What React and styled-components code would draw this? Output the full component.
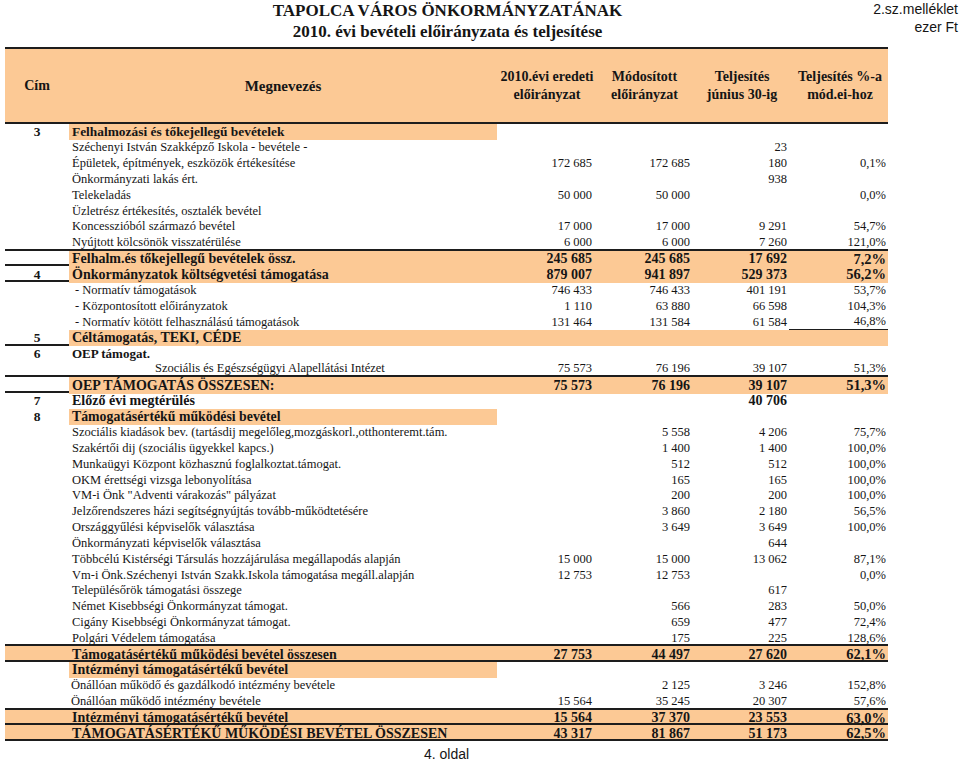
import React from 'react';
import styled, { createGlobalStyle, css } from 'styled-components';

const ORANGE = '#fcc995';
const LINE = '#1d1d1d';
const COLS = '64px 428px 97px 98px 97px 99px';

const GlobalStyle = createGlobalStyle`
  html, body {
    margin: 0;
    padding: 0;
    background: #fff;
  }
  body {
    font-family: "Liberation Serif", "Times New Roman", serif;
    color: #151515;
  }
`;

const Page = styled.div`
  width: 960px;
  padding-left: 5px;
  box-sizing: border-box;
`;

const Top = styled.header`
  display: grid;
  grid-template-columns: 865px 1fr;
  padding-right: 2px;
`;

const Titles = styled.div`
  padding-left: 20px;
  text-align: center;
  font-weight: bold;
  font-size: 17px;
  line-height: 21px;
`;

const Notes = styled.div`
  text-align: right;
  white-space: nowrap;
  font-family: "Liberation Sans", Arial, sans-serif;
  font-size: 14px;
  line-height: 18px;
`;

const Sheet = styled.section`
  width: 883px;
  margin-top: 5px;
`;

const HeadBand = styled.div`
  display: grid;
  grid-template-columns: ${COLS};
  align-items: center;
  height: 77px;
  box-sizing: border-box;
  background: ${ORANGE};
  border-top: 2px solid ${LINE};
  border-bottom: 2px solid ${LINE};
  font-weight: bold;
  font-size: 14px;
  line-height: 18px;
  text-align: center;
`;

const HeadCell = styled.div`
  padding-left: ${p => (p.$num ? '3px' : '0')};
  font-size: ${p => (p.$big ? '15px' : 'inherit')};
`;

const Row = styled.div`
  display: grid;
  grid-template-columns: ${COLS};
  height: 15.84px;
  box-sizing: border-box;
  border-bottom: ${p => (p.$rule ? `2px solid ${LINE}` : 'none')};
  background: ${p => (p.$kind === 'grand' ? ORANGE : 'transparent')};
`;

const cellBase = css`
  display: flex;
  align-items: center;
  white-space: nowrap;
  min-width: 0;
`;

const CodeCell = styled.div`
  ${cellBase};
  justify-content: center;
  font-weight: bold;
  font-size: 13.5px;
`;

const NameCell = styled.div`
  ${cellBase};
  overflow: visible;
  padding-left: ${p => p.$indent || 3}px;
  font-size: ${p => (p.$size ? `${p.$size}px` : p.$bold ? '14px' : '12.5px')};
  font-weight: ${p => (p.$bold ? 'bold' : 'normal')};
  background: ${p => (p.$shade ? ORANGE : 'transparent')};
`;

const NumCell = styled.div`
  ${cellBase};
  justify-content: flex-end;
  padding-right: 2px;
  font-size: ${p => (p.$bold ? (p.$pct ? '14.5px' : '14px') : '12.5px')};
  font-weight: ${p => (p.$bold ? 'bold' : 'normal')};
  background: ${p => (p.$shade ? ORANGE : 'transparent')};
  box-sizing: border-box;
  border-bottom: ${p => (p.$rule ? `2px solid ${LINE}` : 'none')};
`;

const Footer = styled.div`
  width: 883px;
  margin-top: 6px;
  text-align: center;
  font-family: "Liberation Sans", Arial, sans-serif;
  font-size: 14px;
  line-height: 14px;
`;

const E = ['', '', '', ''];

const rows = [
  { code: '3', name: 'Felhalmozási és tőkejellegű bevételek', kind: 'label', size: 13.4, v: E },
  { name: 'Széchenyi István Szakképző Iskola - bevétele -', v: ['', '', '23', ''] },
  { name: 'Épületek, építmények, eszközök értékesítése', v: ['172 685', '172 685', '180', '0,1%'] },
  { name: 'Önkormányzati lakás ért.', v: ['', '', '938', ''] },
  { name: 'Telekeladás', v: ['50 000', '50 000', '', '0,0%'] },
  { name: 'Üzletrész értékesítés, osztalék bevétel', v: E },
  { name: 'Koncesszióból származó bevétel', v: ['17 000', '17 000', '9 291', '54,7%'] },
  { name: 'Nyújtott kölcsönök visszatérülése', v: ['6 000', '6 000', '7 260', '121,0%'], rule: true },
  { name: 'Felhalm.és tőkejellegű bevételek össz.', kind: 'total', v: ['245 685', '245 685', '17 692', '7,2%'], rule: true },
  { code: '4', name: 'Önkormányzatok költségvetési támogatása', kind: 'total', v: ['879 007', '941 897', '529 373', '56,2%'], rule: true },
  { name: '- Normatív támogatások', indent: 6, v: ['746 433', '746 433', '401 191', '53,7%'] },
  { name: '- Központosított előirányzatok', indent: 6, v: ['1 110', '63 880', '66 598', '104,3%'] },
  { name: '- Normatív kötött felhasználású támogatások', indent: 6, v: ['131 464', '131 584', '61 584', '46,8%'], pctRule: true },
  { code: '5', name: 'Céltámogatás, TEKI, CÉDE', kind: 'total', v: E, rule: true },
  { code: '6', name: 'OEP támogat.', kind: 'head', size: 13, v: E },
  { name: 'Szociális és Egészségügyi Alapellátási Intézet', indent: 86, v: ['75 573', '76 196', '39 107', '51,3%'], rule: true },
  { name: 'OEP TÁMOGATÁS ÖSSZESEN:', kind: 'total', v: ['75 573', '76 196', '39 107', '51,3%'], rule: true },
  { code: '7', name: 'Előző évi megtérülés', kind: 'head', v: ['', '', '40 706', ''] },
  { code: '8', name: 'Támogatásértékű működési bevétel', kind: 'label', size: 13.8, v: E },
  { name: 'Szociális kiadások bev. (tartásdij megelőleg,mozgáskorl.,otthonteremt.tám.', v: ['', '5 558', '4 206', '75,7%'] },
  { name: 'Szakértői dij (szociális ügyekkel kapcs.)', v: ['', '1 400', '1 400', '100,0%'] },
  { name: 'Munkaügyi Központ közhasznú foglalkoztat.támogat.', v: ['', '512', '512', '100,0%'] },
  { name: 'OKM érettségi vizsga lebonyolítása', v: ['', '165', '165', '100,0%'] },
  { name: 'VM-i Önk "Adventi várakozás" pályázat', v: ['', '200', '200', '100,0%'] },
  { name: 'Jelzőrendszeres házi segítségnyújtás tovább-működtetésére', v: ['', '3 860', '2 180', '56,5%'] },
  { name: 'Országgyűlési képviselők választása', v: ['', '3 649', '3 649', '100,0%'] },
  { name: 'Önkormányzati képviselők választása', v: ['', '', '644', ''] },
  { name: 'Többcélú Kistérségi Társulás hozzájárulása megállapodás alapján', v: ['15 000', '15 000', '13 062', '87,1%'] },
  { name: 'Vm-i Önk.Széchenyi István Szakk.Iskola támogatása megáll.alapján', v: ['12 753', '12 753', '', '0,0%'] },
  { name: 'Településőrök támogatási összege', v: ['', '', '617', ''] },
  { name: 'Német Kisebbségi Önkormányzat támogat.', v: ['', '566', '283', '50,0%'] },
  { name: 'Cigány Kisebbségi Önkormányzat támogat.', v: ['', '659', '477', '72,4%'] },
  { name: 'Polgári Védelem támogatása', v: ['', '175', '225', '128,6%'], rule: true },
  { name: 'Támogatásértékű működési bevétel összesen', kind: 'grand', v: ['27 753', '44 497', '27 620', '62,1%'], rule: true },
  { name: 'Intézményi támogatásértékű bevétel', kind: 'label', v: E },
  { name: 'Önállóan működő és gazdálkodó  intézmény bevétele', indent: 2, v: ['', '2 125', '3 246', '152,8%'] },
  { name: 'Önállóan működő intézmény bevétele', indent: 2, v: ['15 564', '35 245', '20 307', '57,6%'], rule: true },
  { name: 'Intézményi támogatásértékű bevétel', kind: 'grand', v: ['15 564', '37 370', '23 553', '63,0%'], rule: true },
  { name: 'TÁMOGATÁSÉRTÉKŰ MŰKÖDÉSI BEVÉTEL ÖSSZESEN', kind: 'grand', v: ['43 317', '81 867', '51 173', '62,5%'], rule: true },
];

const headers = [
  ['2010.évi eredeti', 'előirányzat'],
  ['Módosított', 'előirányzat'],
  ['Teljesítés', 'június 30-ig'],
  ['Teljesítés %-a', 'mód.ei-hoz'],
];

function LineRow({ row }) {
  const kind = row.kind || 'item';
  const bold = kind !== 'item';
  const shadeName = kind === 'label' || kind === 'total';
  const shadeNums = kind === 'total';
  return (
    <Row $kind={kind} $rule={row.rule}>
      <CodeCell>{row.code}</CodeCell>
      <NameCell $bold={bold} $shade={shadeName} $indent={row.indent} $size={row.size}>
        {row.name}
      </NameCell>
      {row.v.map((val, i) => (
        <NumCell
          key={i}
          $bold={bold}
          $pct={i === 3}
          $shade={shadeNums}
          $rule={row.pctRule && i === 3}
        >
          {val}
        </NumCell>
      ))}
    </Row>
  );
}

export default function App() {
  return (
    <Page>
      <GlobalStyle />
      <Top>
        <Titles>
          <div>TAPOLCA VÁROS ÖNKORMÁNYZATÁNAK</div>
          <div>2010. évi bevételi előirányzata és teljesítése</div>
        </Titles>
        <Notes>
          <div>2.sz.melléklet</div>
          <div>ezer Ft</div>
        </Notes>
      </Top>
      <Sheet>
        <HeadBand>
          <HeadCell>Cím</HeadCell>
          <HeadCell $big>Megnevezés</HeadCell>
          {headers.map(([a, b]) => (
            <HeadCell key={a} $num>
              {a}
              <br />
              {b}
            </HeadCell>
          ))}
        </HeadBand>
        {rows.map((row, i) => (
          <LineRow key={i} row={row} />
        ))}
      </Sheet>
      <Footer>4. oldal</Footer>
    </Page>
  );
}
